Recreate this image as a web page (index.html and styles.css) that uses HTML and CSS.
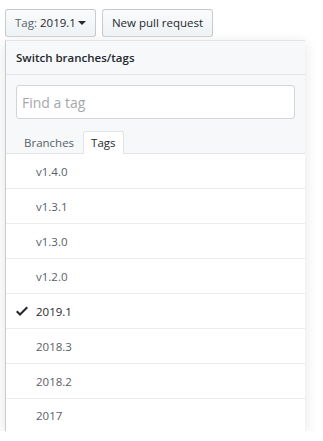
FILE: index.html
```html
<!DOCTYPE html>
<html lang="en">
<head>
<meta charset="UTF-8">
<meta name="viewport" content="width=device-width, initial-scale=1.0">
<title>Switch branches/tags</title>
<link rel="stylesheet" href="styles.css">
</head>
<body>
<div class="toolbar">
    <button class="btn" type="button"><span class="btn-label">Tag:</span> <span class="btn-value">2019.1</span><span class="caret"></span></button>
    <button class="btn" type="button">New pull request</button>
</div>

<div class="select-menu">
    <div class="select-menu-header">Switch branches/tags</div>

    <div class="select-menu-filters">
        <input class="filter-input" type="text" placeholder="Find a tag">
    </div>

    <div class="select-menu-tabs">
        <span class="select-menu-tab">Branches</span>
        <span class="select-menu-tab selected">Tags</span>
    </div>

    <div class="select-menu-list">
        <div class="select-menu-item">v1.4.0</div>
        <div class="select-menu-item">v1.3.1</div>
        <div class="select-menu-item">v1.3.0</div>
        <div class="select-menu-item">v1.2.0</div>
        <div class="select-menu-item selected">
            <svg class="check" width="12" height="16" viewBox="0 0 12 16"><path fill-rule="evenodd" d="M12 5l-8 8-4-4 1.5-1.5L4 10l6.5-6.5L12 5z"></path></svg>
            2019.1
        </div>
        <div class="select-menu-item">2018.3</div>
        <div class="select-menu-item">2018.2</div>
        <div class="select-menu-item">2017</div>
    </div>
</div>
</body>
</html>
```

FILE: styles.css
```css
body {
    font-family: "Open Sans", "Noto Sans", Arial, sans-serif;
    font-size: 11.5px;
    color: #24292e;
    background-color: #fff;
    margin: 0;
    padding: 9px 0 0 5px;
}
.toolbar {
    display: flex;
    gap: 6px;
}
.btn {
    font-family: inherit;
    font-size: 11.5px;
    line-height: 20px;
    height: 28px;
    padding: 3px 9px;
    color: #24292e;
    background-color: #eff3f6;
    background-image: linear-gradient(-180deg, #fafbfc 0%, #eff3f6 90%);
    border: 1px solid rgba(27, 31, 35, 0.2);
    border-radius: 3px;
    box-sizing: border-box;
    white-space: nowrap;
}
.btn-label {
    color: #586069;
}
.caret {
    display: inline-block;
    width: 0;
    height: 0;
    vertical-align: middle;
    border-top: 4px solid #24292e;
    border-left: 4px solid transparent;
    border-right: 4px solid transparent;
    margin-top: -2px;
    margin-left: 2px;
}
.select-menu {
    width: 299px;
    margin-top: 3px;
    background-color: #fff;
    border-left: 1px solid #c9cbcd;
    border-top: 1px solid #e1e4e8;
    box-shadow: 0 3px 12px rgba(27, 31, 35, 0.12);
}
.select-menu-header {
    padding: 8px 10px;
    line-height: 17px;
    font-weight: 600;
    background-color: #f6f8fa;
    border-bottom: 1px solid #e1e4e8;
}
.select-menu-filters {
    padding: 10px 10px 0;
    background-color: #f6f8fa;
}
.filter-input {
    display: block;
    width: 100%;
    height: 34px;
    padding: 5px 5px;
    font-family: inherit;
    font-size: 14px;
    color: #24292e;
    background-color: #fff;
    border: 1px solid #d1d5da;
    border-radius: 3px;
    box-sizing: border-box;
}
.filter-input::placeholder {
    color: #a3a8ad;
}
.select-menu-tabs {
    display: flex;
    gap: 1px;
    padding: 12px 10px 0;
    background-color: #f6f8fa;
    border-bottom: 1px solid #e1e4e8;
}
.select-menu-tab {
    padding: 0 7px;
    line-height: 21px;
    color: #586069;
    border: 1px solid transparent;
    border-bottom: 0;
    border-radius: 3px 3px 0 0;
    margin-bottom: -1px;
}
.select-menu-tab.selected {
    color: #24292e;
    background-color: #fff;
    border-color: #e1e4e8;
    height: 22px;
}
.select-menu-item {
    position: relative;
    display: flex;
    align-items: center;
    height: 34px;
    padding-left: 30px;
    color: #586069;
    border-bottom: 1px solid #eaecef;
}
.select-menu-item:last-child {
    height: 23px;
    align-items: flex-start;
    padding-top: 9px;
    border-bottom: 0;
}
.select-menu-item.selected {
    color: #24292e;
}
.check {
    position: absolute;
    left: 10px;
    top: 9px;
    fill: #24292e;
}
```
